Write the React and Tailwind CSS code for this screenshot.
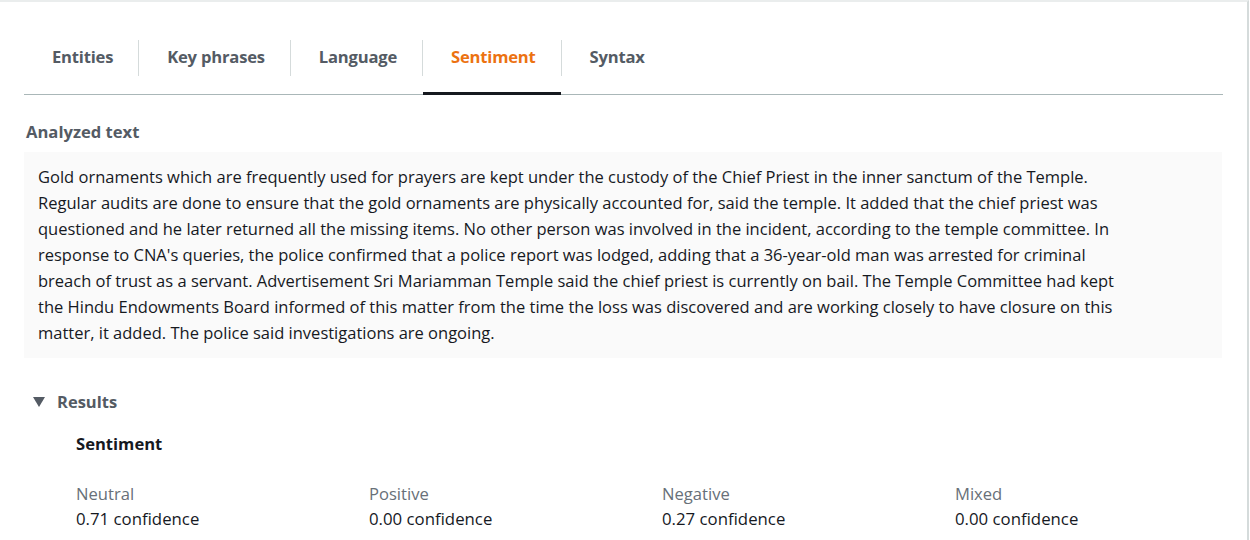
import React from "react";

const lines = [
  "Gold ornaments which are frequently used for prayers are kept under the custody of the Chief Priest in the inner sanctum of the Temple.",
  "Regular audits are done to ensure that the gold ornaments are physically accounted for, said the temple. It added that the chief priest was",
  "questioned and he later returned all the missing items. No other person was involved in the incident, according to the temple committee. In",
  "response to CNA's queries, the police confirmed that a police report was lodged, adding that a 36-year-old man was arrested for criminal",
  "breach of trust as a servant. Advertisement Sri Mariamman Temple said the chief priest is currently on bail. The Temple Committee had kept",
  "the Hindu Endowments Board informed of this matter from the time the loss was discovered and are working closely to have closure on this",
  "matter, it added. The police said investigations are ongoing.",
];

const tabs = ["Entities", "Key phrases", "Language", "Sentiment", "Syntax"];

const results = [
  ["Neutral", "0.71 confidence"],
  ["Positive", "0.00 confidence"],
  ["Negative", "0.27 confidence"],
  ["Mixed", "0.00 confidence"],
];

export default function App() {
  return (
    <div
      className="w-[1250px] h-[540px] overflow-hidden bg-white text-[#16191f]"
      style={{ fontFamily: '"Open Sans", "Noto Sans", Arial, sans-serif' }}
    >
      <div className="h-full w-[1249px] border-t-2 border-t-[#eaeded] border-r-2 border-r-[#d5dbdb]">
        <div className="pl-[24px] pr-[24px] pt-[20px]">
          {/* Tabs */}
          <div className="flex items-stretch border-b border-[#aab7b8] h-[73px]">
            {tabs.map((t, i) => {
              const active = t === "Sentiment";
              return (
                <div key={t} className="flex items-stretch">
                  <div
                    className={
                      "flex items-center pl-[28px] pr-[25px] -mb-px border-b-[3px] " +
                      (active
                        ? "border-b-[#16191f] text-[#ec7211]"
                        : "border-b-transparent text-[#545b64]")
                    }
                  >
                    <span className="text-[16.6px] font-bold tracking-[-0.2px]">{t}</span>
                  </div>
                  {i < tabs.length - 1 && (
                    <div className="w-px bg-[#d5dbdb] my-[18px]" />
                  )}
                </div>
              );
            })}
          </div>

          {/* Analyzed text */}
          <div className="mt-[25px] pl-[2px] text-[16.6px] font-bold text-[#545b64] leading-[24px]">
            Analyzed text
          </div>
          <div className="mt-[8px] mr-[1px] bg-[#fafafa] pl-[14px] pt-[12px] pb-[12px] text-[16.5px] leading-[26px] text-[#16191f]">
            {lines.map((l, i) => (
              <div key={i} className="whitespace-nowrap">
                {l}
              </div>
            ))}
          </div>

          {/* Results */}
          <div className="mt-[32px] flex items-center pl-[8px] h-[24px]">
            <svg width="14" height="12" viewBox="0 0 14 12" className="mr-[11px]">
              <path d="M1 1 L13 1 L7 11 Z" fill="#545b64" />
            </svg>
            <span className="text-[16.5px] font-bold text-[#545b64]">Results</span>
          </div>
          <div className="pl-[52px]">
            <div className="mt-[18px] text-[16.6px] font-bold text-[#16191f] leading-[24px]">
              Sentiment
            </div>
            <div className="mt-[26px] grid grid-cols-[repeat(4,293px)]">
              {results.map(([k, v]) => (
                <div key={k} className="flex flex-col">
                  <span className="text-[16.6px] leading-[24px] text-[#687078]">{k}</span>
                  <span className="text-[16.8px] leading-[25px] text-[#16191f]">{v}</span>
                </div>
              ))}
            </div>
          </div>
        </div>
      </div>
    </div>
  );
}
